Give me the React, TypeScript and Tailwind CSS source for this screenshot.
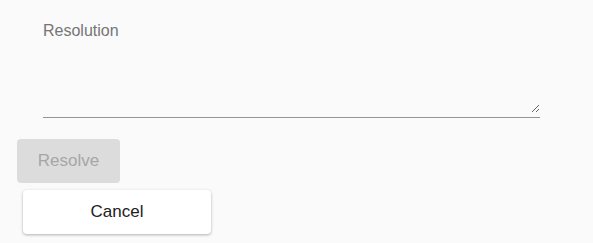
import React from "react";

export default function App() {
  return (
    <div className="w-[593px] h-[243px] bg-[#fafafa] overflow-hidden font-['Liberation_Sans',Arial,sans-serif]">
      <div className="pl-[43px] pt-[22px]">
        <label className="block text-[16px] leading-[18px] text-[#757575]">Resolution</label>
        <textarea
          className="block mt-[10px] w-[497px] h-[63px] bg-transparent border-0 outline-none resize-y p-0 text-[16px] text-[#212121]"
        />
        <div className="mt-[4px] w-[497px] h-px bg-[#949494]" />
      </div>
      <div className="pl-[17px] mt-[21px]">
        <button
          disabled
          className="w-[103px] h-[44px] rounded-[4px] bg-[#dcdcdc] text-[#a6a6a6] text-[17px] leading-[20px]"
        >
          Resolve
        </button>
      </div>
      <div className="pl-[23px] mt-[7px]">
        <button className="w-[188px] h-[44px] rounded-[4px] bg-white text-[#212121] text-[17px] leading-[20px] shadow-[0_1px_3px_rgba(0,0,0,0.3)]">
          Cancel
        </button>
      </div>
    </div>
  );
}
